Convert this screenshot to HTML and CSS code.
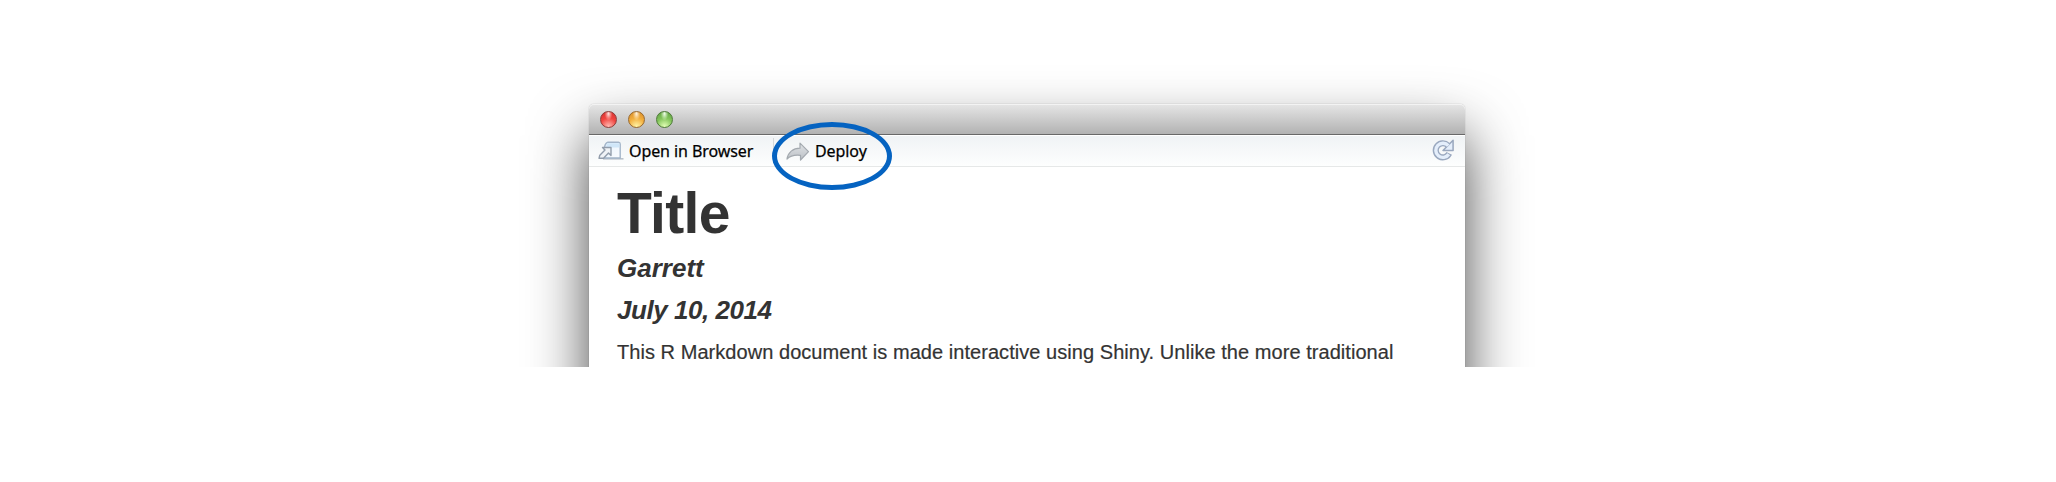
FILE: index.html
```html
<!DOCTYPE html>
<html lang="en">
<head>
<meta charset="utf-8">
<title>Title</title>
<link rel="stylesheet" href="styles.css">
</head>
<body>
<main class="stage">
  <section class="window">
    <header class="titlebar">
      <i class="light red"></i><i class="light yellow"></i><i class="light green"></i>
    </header>
    <nav class="toolbar">
      <svg class="open-icon" viewBox="0 0 26 20">
        <defs><linearGradient id="pane" x1="0" y1="0" x2="1" y2="1"><stop offset="0" stop-color="#e6f2fc"/><stop offset="1" stop-color="#fafcfe"/></linearGradient></defs>
        <path d="M5 17.8H25.5" stroke="#bbc2ca" stroke-width="1.6"/>
        <path d="M6.5 6Q7.6 1.4 10 1.2H20.5Q22.2 1.2 22.2 3V17H6.5Z" fill="url(#pane)" stroke="#a3b5c9" stroke-width="1.4"/>
        <path d="M9.5 2.3H21.4V6.5H7.7Z" fill="#cfe6f8"/>
        <path d="M4.5 6.5H13V14.5L10.5 12L5.5 17.3H1L1.8 14.2L7 9Z" fill="#f0f3f6" stroke="#929dab" stroke-width="1.4" stroke-linejoin="round"/>
      </svg>
      <span class="label open">Open in Browser</span>
      <i class="divider"></i>
      <svg class="deploy-icon" viewBox="0 0 24 20">
        <defs><linearGradient id="arrow" x1="0" y1="0" x2="0" y2="1"><stop offset="0" stop-color="#dfe2e5"/><stop offset="1" stop-color="#bcc1c6"/></linearGradient></defs>
        <path d="M14 1.2L22.5 9.7L14.5 18V13.3C8.5 12.6 4.5 13.5 1 17C2 10.5 7 6.2 14 6.2Z" fill="url(#arrow)" stroke="#a3a9af" stroke-width="1.2" stroke-linejoin="round"/>
      </svg>
      <span class="label deploy">Deploy</span>
      <svg class="refresh-icon" viewBox="0 0 24 24">
        <path d="M16.6 6.6A7.4 7.4 0 1 0 18 15" fill="none" stroke="#9aa8bf" stroke-width="6.4"/>
        <path d="M22 1.3V12H11.5Z" fill="#e4eefb" stroke="#9aa8bf" stroke-width="1.6" stroke-linejoin="round"/>
        <path d="M17 7A7.4 7.4 0 1 0 17.5 15.9" fill="none" stroke="#e4eefb" stroke-width="3.5"/>
      </svg>
    </nav>
    <article class="document">
      <h1 class="title">Title</h1>
      <h4 class="byline author">Garrett</h4>
      <h4 class="byline date">July 10, 2014</h4>
      <p class="intro">This R Markdown document is made interactive using Shiny. Unlike the more traditional</p>
    </article>
  </section>
  <i class="highlight"></i>
</main>
</body>
</html>
```
FILE: styles.css
```css
body { margin: 0; background: #fff; }
.stage { position: relative; box-sizing: border-box; width: 2056px; height: 367px; padding-top: 104px; overflow: hidden; }
.window { width: 876px; height: 430px; margin-left: 589px; background: #fff; border-radius: 5px 5px 0 0; box-shadow: 0 31px 58px rgba(0,0,0,.72), 0 0 1px rgba(0,0,0,.4); }
.titlebar { box-sizing: border-box; height: 31px; padding: 7px 0 0 11px; display: flex; gap: 11px; border-bottom: 1px solid #686868; border-radius: 5px 5px 0 0; background: linear-gradient(#e6e6e6, #b2b2b2); box-shadow: inset 0 1px #f3f3f3; }
.light { box-sizing: border-box; width: 17px; height: 17px; border: 1px solid; border-radius: 50%; }
.red { border-color: #8c3d3a; background: radial-gradient(ellipse at 50% 12%, #ffe4e2 0, #ffc6c280 20%, transparent 36%), radial-gradient(circle at 50% 95%, #ffb9b2, #f0443f 52%, #d42f2f); }
.yellow { border-color: #97682f; background: radial-gradient(ellipse at 50% 12%, #fff4df 0, #ffe8bd80 20%, transparent 36%), radial-gradient(circle at 50% 95%, #fff5a6, #f2ae3d 52%, #d68a29); }
.green { border-color: #4e7a39; background: radial-gradient(ellipse at 50% 12%, #f1fdea 0, #dcf5cd80 20%, transparent 36%), radial-gradient(circle at 50% 95%, #e2ffb5, #83c45b 52%, #5d9d41); }
.toolbar { box-sizing: border-box; height: 32px; padding-left: 9px; display: flex; align-items: flex-start; border-top: 1px solid #fff; border-bottom: 1px solid #e6e8e8; background: linear-gradient(#f0f3f5, #fdfefe); }
.open-icon { width: 26px; height: 20px; margin-top: 5px; }
.label { font: 16px/20px "Noto Sans", sans-serif; color: #000; white-space: nowrap; margin-top: 5px; -webkit-text-stroke: .25px #000; letter-spacing: -.08px; }
.open { width: 124px; margin-left: 5px; }
.divider { width: 1px; height: 25px; margin: 2px 0 0 20px; background: #d5d8da; }
.deploy-icon { width: 24px; height: 20px; margin: 6px 0 0 12px; }
.deploy { margin-left: 5px; }
.refresh-icon { width: 23px; height: 23px; margin: 3px 10px 0 auto; }
.document { padding: 16px 0 0 28px; font-family: "Liberation Sans", Arial, sans-serif; color: #333; }
.title, .byline, .intro { margin: 0; white-space: nowrap; }
.title { font-size: 57px; line-height: 60px; letter-spacing: -.7px; }
.byline { font-size: 26px; line-height: 42px; font-style: italic; }
.author { margin-top: 4px; }
.date { letter-spacing: -.45px; }
.intro { font-size: 20px; line-height: 36px; margin-top: 3px; letter-spacing: .05px; -webkit-text-stroke: .2px #333; }
.highlight { position: absolute; box-sizing: border-box; left: 772px; top: 122px; width: 120px; height: 68px; border: 5px solid #0563c1; border-radius: 50%; }
```
